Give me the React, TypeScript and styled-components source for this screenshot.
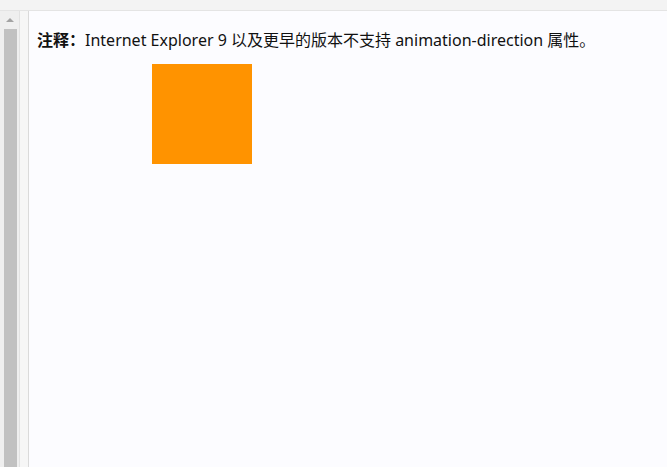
import React from "react";
import styled, { createGlobalStyle } from "styled-components";

const GlobalStyle = createGlobalStyle`
  html, body {
    margin: 0;
    padding: 0;
    background: #fcfcff;
  }
  body {
    font-family: "Noto Sans", "Noto Sans CJK SC", sans-serif;
  }
`;

const Frame = styled.div`
  display: flex;
  flex-direction: column;
  width: 667px;
  height: 467px;
  overflow: hidden;
`;

const TopBar = styled.div`
  height: 10px;
  flex: none;
  background: #f3f3f3;
  border-bottom: 1px solid #e4e4e4;
`;

const Body = styled.div`
  display: flex;
  flex: 1;
  min-height: 0;
`;

const ScrollTrack = styled.div`
  width: 19px;
  flex: none;
  display: flex;
  flex-direction: column;
  align-items: center;
  background: #efefef;
  border-right: 1px solid #e2e2e2;
`;

const ArrowUp = styled.div`
  width: 0;
  height: 0;
  margin: 7px 0 7px 1px;
  border-left: 4px solid transparent;
  border-right: 4px solid transparent;
  border-bottom: 4px solid #a3a3a3;
`;

const Thumb = styled.div`
  flex: 1;
  width: 13px;
  margin-left: 1px;
  background: #c1c1c1;
`;

const Gutter = styled.div`
  width: 8px;
  flex: none;
  background: #f6f6f6;
  border-right: 1px solid #dadada;
`;

const Content = styled.div`
  flex: 1;
  padding: 0 8px;
  background: #fcfcff;
`;

const Note = styled.p`
  margin: 17px 0 0;
  font-size: 16px;
  line-height: 24px;
  color: #111;

  b {
    font-weight: 700;
  }
`;

const Box = styled.div`
  width: 100px;
  height: 100px;
  margin: 12px 0 0 115px;
  background: #ff9300;
`;

export default function App() {
  return (
    <Frame>
      <GlobalStyle />
      <TopBar />
      <Body>
        <ScrollTrack>
          <ArrowUp />
          <Thumb />
        </ScrollTrack>
        <Gutter />
        <Content>
          <Note>
            <b>注释：</b>Internet Explorer 9 以及更早的版本不支持 animation-direction 属性。
          </Note>
          <Box />
        </Content>
      </Body>
    </Frame>
  );
}
